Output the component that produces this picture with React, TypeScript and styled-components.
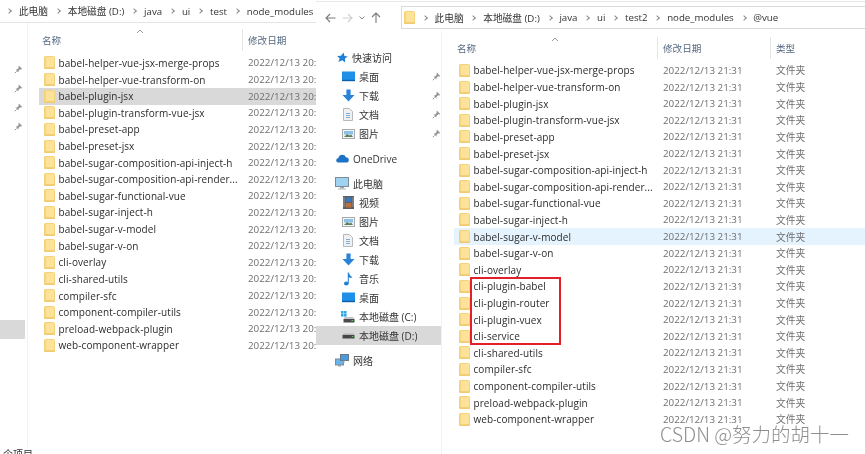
import React from 'react';
import styled, { createGlobalStyle } from 'styled-components';

const GlobalStyle = createGlobalStyle`
  html, body {
    margin: 0;
    padding: 0;
    background: #ffffff;
  }
  body {
    font-family: "Open Sans", "Noto Sans CJK SC", sans-serif;
    font-size: 10px;
    color: #2b2b2b;
  }
`;

const Page = styled.div`
  position: relative;
  display: flex;
  width: 865px;
  height: 454px;
  overflow: hidden;
  filter: blur(0.3px);
`;

const LeftWindow = styled.div`
  display: flex;
  flex-direction: column;
  flex: 0 0 316px;
  width: 316px;
  overflow: hidden;
`;

const RightWindow = styled.div`
  display: flex;
  flex-direction: column;
  flex: 1;
  min-width: 0;
  overflow: hidden;
`;

const LeftAddress = styled.div`
  display: flex;
  align-items: center;
  gap: 7.9px;
  height: 23px;
  flex: none;
  padding-left: 7px;
  border-bottom: 1px solid #e4e4e4;
  box-sizing: border-box;
`;

const Toolbar = styled.div`
  display: flex;
  align-items: center;
  height: 30px;
  flex: none;
  margin-top: 1px;
  border-top: 1px solid #e8e8e8;
  padding: 3px 0 1px 9px;
  box-sizing: border-box;
`;

const NavButtons = styled.div`
  display: flex;
  align-items: center;
  gap: 6px;
  width: 76px;
  flex: none;
`;

const AddressBox = styled.div`
  display: flex;
  align-items: center;
  gap: 7.8px;
  flex: 1;
  height: 23px;
  padding-left: 2px;
  border: 1px solid #dadada;
  border-right: 0;
  box-sizing: border-box;
`;

const Crumb = styled.span`
  font-size: 9.7px;
  white-space: nowrap;
  color: #333333;
`;

const Chevron = styled.span`
  width: 3px;
  height: 3px;
  flex: none;
  border-top: 1px solid #8a8a8a;
  border-right: 1px solid #8a8a8a;
  transform: rotate(45deg);
`;

const Body = styled.div`
  display: flex;
  flex: 1;
  min-height: 0;
`;

const Sidebar = styled.div<{ $width: number; $top: number }>`
  display: flex;
  flex-direction: column;
  flex: 0 0 ${(p) => p.$width}px;
  box-sizing: border-box;
  padding-top: ${(p) => p.$top}px;
  border-right: 1px solid #f2f2f2;
`;

const NavGroup = styled.div<{ $gap?: number }>`
  display: flex;
  flex-direction: column;
  margin-top: ${(p) => p.$gap ?? 0}px;
`;

const NavItem = styled.div<{ $indent: number; $active?: boolean }>`
  display: flex;
  align-items: center;
  gap: 4px;
  height: 19px;
  padding-left: ${(p) => p.$indent}px;
  background: ${(p) => (p.$active ? '#d9d9d9' : 'transparent')};
  font-size: 10px;
  white-space: nowrap;
  color: #333333;
`;

const NavLabel = styled.span`
  flex: 1;
`;

const IconSlot = styled.span`
  display: flex;
  align-items: center;
  justify-content: center;
  flex: none;
  width: 14px;
`;

const PinSlot = styled.div`
  display: flex;
  align-items: center;
  height: 19px;
  padding-left: 14px;
`;

const LeftStub = styled.div`
  height: 19px;
  margin-top: 184px;
  margin-right: 2px;
  background: #d9d9d9;
`;

const Content = styled.div<{ $top: number }>`
  position: relative;
  flex: 1;
  min-width: 0;
  padding-top: ${(p) => p.$top}px;
`;

const HeaderRow = styled.div<{ $left: number }>`
  position: relative;
  display: grid;
  grid-template-columns: 209px 113px 1fr;
  align-items: center;
  height: 24px;
  margin-left: ${(p) => p.$left}px;
  margin-bottom: 2.7px;
`;

const HeaderCell = styled.div`
  position: relative;
  display: flex;
  align-items: center;
  height: 22px;
  color: #566a82;
  font-size: 9.6px;

  &:first-child {
    padding-left: 3px;
  }

  &:not(:first-child)::before {
    content: '';
    position: absolute;
    left: -6px;
    top: 0;
    bottom: 0;
    border-left: 1px solid #e5e5e5;
  }
`;

const SortCaret = styled.svg`
  position: absolute;
  left: 97px;
  top: 0;
`;

const FileList = styled.div<{ $left: number }>`
  position: relative;
  margin-left: ${(p) => p.$left}px;
`;

const FileRow = styled.div<{ $bg?: string }>`
  display: grid;
  grid-template-columns: 209px 113px 1fr;
  align-items: center;
  height: 16.62px;
  background: ${(p) => p.$bg ?? 'transparent'};
`;

const NameCell = styled.div`
  display: flex;
  align-items: center;
  gap: 3.5px;
  padding-left: 5px;
  font-size: 10px;
  letter-spacing: 0.08px;
  white-space: nowrap;
  color: #2b2b2b;
`;

const DateCell = styled.div`
  font-size: 9.8px;
  white-space: nowrap;
  color: #6f6f6f;
`;

const RedBox = styled.div`
  position: absolute;
  left: 16px;
  top: 215px;
  width: 91px;
  height: 68px;
  box-sizing: border-box;
  border: 2px solid #e3202a;
  pointer-events: none;
`;

const StatusBar = styled.div`
  height: 7px;
  flex: none;
  overflow: hidden;
  padding-left: 3px;
  font-size: 10px;
  line-height: 14px;
  color: #333333;
`;

const Watermark = styled.div`
  position: absolute;
  left: 660px;
  bottom: 7px;
  font-family: "Noto Sans CJK SC", sans-serif;
  font-size: 19.5px;
  font-weight: 300;
  line-height: 26px;
  white-space: nowrap;
  color: #8e8e8e;
  text-shadow: 0 0 1px #ffffff;
`;

const FolderIcon = () => (
  <svg width="11" height="13" viewBox="0 0 11 13">
    <path d="M0.5 1.5 Q0.5 0.5 1.5 0.5 H9.5 Q10.5 0.5 10.5 1.5 V12.5 H0.5 Z" fill="#fde29a" stroke="#f5d27a" />
    <path d="M0.5 0.5 H1.6 V12.5 H0.5 Z" fill="#f3cd72" />
    <rect x="1" y="11.3" width="9.6" height="1.3" fill="#efc76a" />
  </svg>
);

const PinIcon = () => (
  <svg width="9" height="9" viewBox="0 0 9 9">
    <path d="M5 0.8 L8.2 4 L7.2 4.6 L6.2 4.2 L4.6 5.8 L4.4 7.4 L1.6 4.6 L3.2 4.4 L4.8 2.8 L4.4 1.8 Z" fill="#8f9397" />
    <path d="M2.6 6.4 L0.8 8.2" stroke="#8f9397" />
  </svg>
);

const StarIcon = () => (
  <svg width="11" height="11" viewBox="0 0 11 11">
    <path d="M6.6 0.4 L7.4 3.9 L10.8 4.6 L7.9 6.6 L8.2 10.6 L5.2 8.2 L1.4 10 L2.7 6.5 L0.2 3.9 L4 3.8 Z" fill="#1f7fd6" />
  </svg>
);

const DesktopIcon = () => (
  <svg width="13" height="11" viewBox="0 0 13 11">
    <rect x="0" y="0.5" width="13" height="9.5" fill="#1f8fe8" />
    <rect x="0" y="8.8" width="13" height="1.4" fill="#0f5ea8" />
  </svg>
);

const DownloadIcon = () => (
  <svg width="13" height="13" viewBox="0 0 13 13">
    <path d="M4.4 0.5 H8.6 V6 H12.5 L6.5 12.5 L0.5 6 H4.4 Z" fill="#2a83d8" />
  </svg>
);

const DocIcon = () => (
  <svg width="10" height="13" viewBox="0 0 10 13">
    <path d="M0.5 0.5 H6.5 L9.5 3.5 V12.5 H0.5 Z" fill="#eef0f2" stroke="#b6b9bc" />
    <path d="M3 5.5 H7 M3 7.5 H7 M3 9.5 H7" stroke="#7fb0dc" />
  </svg>
);

const PictureIcon = () => (
  <svg width="13" height="10" viewBox="0 0 13 10">
    <rect x="0.5" y="0.5" width="12" height="9" fill="#f3f4f5" stroke="#a8abae" />
    <rect x="2" y="2" width="9" height="3.5" fill="#8fc0e8" />
    <path d="M2 8 L5 5 L7.5 6.5 L9 5.6 L11 8 Z" fill="#5c7f5c" />
  </svg>
);

const CloudIcon = () => (
  <svg width="13" height="9" viewBox="0 0 13 9">
    <path d="M3 8.6 Q0.2 8.6 0.2 6.2 Q0.2 4.2 2.4 4 Q3.2 0.8 6.4 0.8 Q9 0.8 9.8 3.2 Q12.8 3.4 12.8 6 Q12.8 8.6 10 8.6 Z" fill="#1c72c4" />
  </svg>
);

const MonitorIcon = () => (
  <svg width="14" height="13" viewBox="0 0 14 13">
    <rect x="0.5" y="0.5" width="13" height="9" fill="#9fd3f2" stroke="#7f8a94" />
    <rect x="5" y="10" width="4" height="1.5" fill="#a3a8ad" />
    <rect x="3" y="11.4" width="8" height="1.2" fill="#bcc0c4" />
  </svg>
);

const VideoIcon = () => (
  <svg width="11" height="13" viewBox="0 0 11 13">
    <rect x="0" y="0" width="11" height="13" fill="#5b5e63" />
    <rect x="2.5" y="1.5" width="6" height="4.5" fill="#3d78b8" />
    <rect x="2.5" y="7" width="6" height="4.5" fill="#b8703d" />
    <path d="M1 1.5 V11.5 M10 1.5 V11.5" stroke="#d8d8d8" strokeDasharray="1 1" />
  </svg>
);

const MusicIcon = () => (
  <svg width="10" height="14" viewBox="0 0 10 14">
    <path d="M4.8 0.5 H5.8 Q6.2 3.4 9.2 5.2 Q8.2 6.4 5.8 5.2 V11 Q5.8 13.4 3.2 13.4 Q1 13.4 1 11.5 Q1 9.6 3.2 9.6 Q4.2 9.6 4.8 10 Z" fill="#1f7fd6" />
  </svg>
);

const DriveCIcon = () => (
  <svg width="14" height="12" viewBox="0 0 14 12">
    <rect x="0" y="0" width="2.6" height="2.6" fill="#2fa8e8" />
    <rect x="3" y="0" width="2.6" height="2.6" fill="#2fa8e8" />
    <rect x="0" y="3" width="2.6" height="2.6" fill="#2fa8e8" />
    <rect x="3" y="3" width="2.6" height="2.6" fill="#2fa8e8" />
    <path d="M2.5 8 L3.5 6 H12 L13.5 8 Z" fill="#c4c6c8" />
    <rect x="2.5" y="8" width="11" height="3.5" fill="#4a4d50" />
    <rect x="10.5" y="9" width="1.6" height="1" fill="#4fd05a" />
  </svg>
);

const DriveIcon = () => (
  <svg width="13" height="6" viewBox="0 0 13 6">
    <path d="M0.5 2 L1.5 0.5 H11.5 L12.5 2 Z" fill="#b4b6b8" />
    <rect x="0.5" y="2" width="12" height="3.5" fill="#45484b" />
    <rect x="9.8" y="3" width="1.6" height="1" fill="#4fd05a" />
  </svg>
);

const NetworkIcon = () => (
  <svg width="14" height="13" viewBox="0 0 14 13">
    <rect x="0.5" y="5" width="8" height="6" fill="#69b4e8" stroke="#7f8a94" />
    <rect x="3" y="11" width="3" height="1.6" fill="#a3a8ad" />
    <rect x="5.5" y="0.5" width="8" height="6" fill="#4a9ade" stroke="#6c7884" />
    <path d="M9 6.5 V9" stroke="#a3a8ad" />
  </svg>
);

const commonFiles = [
  'babel-helper-vue-jsx-merge-props',
  'babel-helper-vue-transform-on',
  'babel-plugin-jsx',
  'babel-plugin-transform-vue-jsx',
  'babel-preset-app',
  'babel-preset-jsx',
  'babel-sugar-composition-api-inject-h',
  'babel-sugar-composition-api-render...',
  'babel-sugar-functional-vue',
  'babel-sugar-inject-h',
  'babel-sugar-v-model',
  'babel-sugar-v-on',
  'cli-overlay',
];

const tailFiles = [
  'cli-shared-utils',
  'compiler-sfc',
  'component-compiler-utils',
  'preload-webpack-plugin',
  'web-component-wrapper',
];

const leftFiles = [...commonFiles, ...tailFiles];

const rightFiles = [
  ...commonFiles,
  'cli-plugin-babel',
  'cli-plugin-router',
  'cli-plugin-vuex',
  'cli-service',
  ...tailFiles,
];

const quickItems = [
  { label: '桌面', icon: <DesktopIcon /> },
  { label: '下载', icon: <DownloadIcon /> },
  { label: '文档', icon: <DocIcon /> },
  { label: '图片', icon: <PictureIcon /> },
];

const pcItems = [
  { label: '视频', icon: <VideoIcon /> },
  { label: '图片', icon: <PictureIcon /> },
  { label: '文档', icon: <DocIcon /> },
  { label: '下载', icon: <DownloadIcon /> },
  { label: '音乐', icon: <MusicIcon /> },
  { label: '桌面', icon: <DesktopIcon /> },
  { label: '本地磁盘 (C:)', icon: <DriveCIcon /> },
];

function Crumbs({ items }: { items: string[] }) {
  return (
    <>
      {items.map((item) => (
        <React.Fragment key={item}>
          <Chevron />
          <Crumb>{item}</Crumb>
        </React.Fragment>
      ))}
    </>
  );
}

function Caret() {
  return (
    <SortCaret width="8" height="5" viewBox="0 0 8 5">
      <path d="M1 4 L4 1 L7 4" fill="none" stroke="#9a9a9a" />
    </SortCaret>
  );
}

export default function App() {
  return (
    <Page>
      <GlobalStyle />
      <LeftWindow>
        <LeftAddress>
          <Crumbs items={['此电脑', '本地磁盘 (D:)', 'java', 'ui', 'test', 'node_modules']} />
        </LeftAddress>
        <Body>
          <Sidebar $width={28} $top={37}>
            {[0, 1, 2, 3].map((i) => (
              <PinSlot key={i}>
                <PinIcon />
              </PinSlot>
            ))}
            <LeftStub />
          </Sidebar>
          <Content $top={5}>
            <HeaderRow $left={11}>
              <HeaderCell>
                名称
                <Caret />
              </HeaderCell>
              <HeaderCell>修改日期</HeaderCell>
              <HeaderCell />
            </HeaderRow>
            <FileList $left={11}>
              {leftFiles.map((name) => (
                <FileRow key={name} $bg={name === 'babel-plugin-jsx' ? '#d9d9d9' : undefined}>
                  <NameCell>
                    <FolderIcon />
                    {name}
                  </NameCell>
                  <DateCell>2022/12/13 20:51</DateCell>
                </FileRow>
              ))}
            </FileList>
          </Content>
        </Body>
        <StatusBar>个项目</StatusBar>
      </LeftWindow>

      <RightWindow>
        <Toolbar>
          <NavButtons>
            <svg width="11" height="10" viewBox="0 0 11 10">
              <path d="M10.5 5 H1 M5 1 L1 5 L5 9" fill="none" stroke="#7a7a7a" strokeWidth="1.1" />
            </svg>
            <svg width="11" height="10" viewBox="0 0 11 10">
              <path d="M0.5 5 H10 M6 1 L10 5 L6 9" fill="none" stroke="#cfcfcf" strokeWidth="1.1" />
            </svg>
            <svg width="6" height="4" viewBox="0 0 6 4">
              <path d="M0.5 0.5 L3 3 L5.5 0.5" fill="none" stroke="#8a8a8a" />
            </svg>
            <svg width="10" height="11" viewBox="0 0 10 11">
              <path d="M5 11 V1 M1 5 L5 1 L9 5" fill="none" stroke="#7a7a7a" strokeWidth="1.1" />
            </svg>
          </NavButtons>
          <AddressBox>
            <FolderIcon />
            <Crumbs items={['此电脑', '本地磁盘 (D:)', 'java', 'ui', 'test2', 'node_modules', '@vue']} />
          </AddressBox>
        </Toolbar>
        <Body>
          <Sidebar $width={126} $top={17}>
            <NavGroup>
              <NavItem $indent={21}>
                <StarIcon />
                <NavLabel>快速访问</NavLabel>
              </NavItem>
              {quickItems.map((item) => (
                <NavItem key={item.label} $indent={25}>
                  <IconSlot>{item.icon}</IconSlot>
                  <NavLabel>{item.label}</NavLabel>
                  <PinIcon />
                </NavItem>
              ))}
            </NavGroup>
            <NavGroup $gap={6}>
              <NavItem $indent={19}>
                <IconSlot>
                  <CloudIcon />
                </IconSlot>
                <NavLabel>OneDrive</NavLabel>
              </NavItem>
            </NavGroup>
            <NavGroup $gap={6.3}>
              <NavItem $indent={19}>
                <IconSlot>
                  <MonitorIcon />
                </IconSlot>
                <NavLabel>此电脑</NavLabel>
              </NavItem>
              {pcItems.map((item) => (
                <NavItem key={item.label} $indent={25}>
                  <IconSlot>{item.icon}</IconSlot>
                  <NavLabel>{item.label}</NavLabel>
                </NavItem>
              ))}
              <NavItem $indent={25} $active>
                <IconSlot>
                  <DriveIcon />
                </IconSlot>
                <NavLabel>本地磁盘 (D:)</NavLabel>
              </NavItem>
            </NavGroup>
            <NavGroup $gap={6}>
              <NavItem $indent={19}>
                <IconSlot>
                  <NetworkIcon />
                </IconSlot>
                <NavLabel>网络</NavLabel>
              </NavItem>
            </NavGroup>
          </Sidebar>
          <Content $top={4.5}>
            <HeaderRow $left={12}>
              <HeaderCell>
                名称
                <Caret />
              </HeaderCell>
              <HeaderCell>修改日期</HeaderCell>
              <HeaderCell>类型</HeaderCell>
            </HeaderRow>
            <FileList $left={12}>
              {rightFiles.map((name) => (
                <FileRow key={name} $bg={name === 'babel-sugar-v-model' ? '#e5f3ff' : undefined}>
                  <NameCell>
                    <FolderIcon />
                    {name}
                  </NameCell>
                  <DateCell>2022/12/13 21:31</DateCell>
                  <DateCell>文件夹</DateCell>
                </FileRow>
              ))}
              <RedBox />
            </FileList>
          </Content>
        </Body>
      </RightWindow>
      <Watermark>CSDN @努力的胡十一</Watermark>
    </Page>
  );
}
